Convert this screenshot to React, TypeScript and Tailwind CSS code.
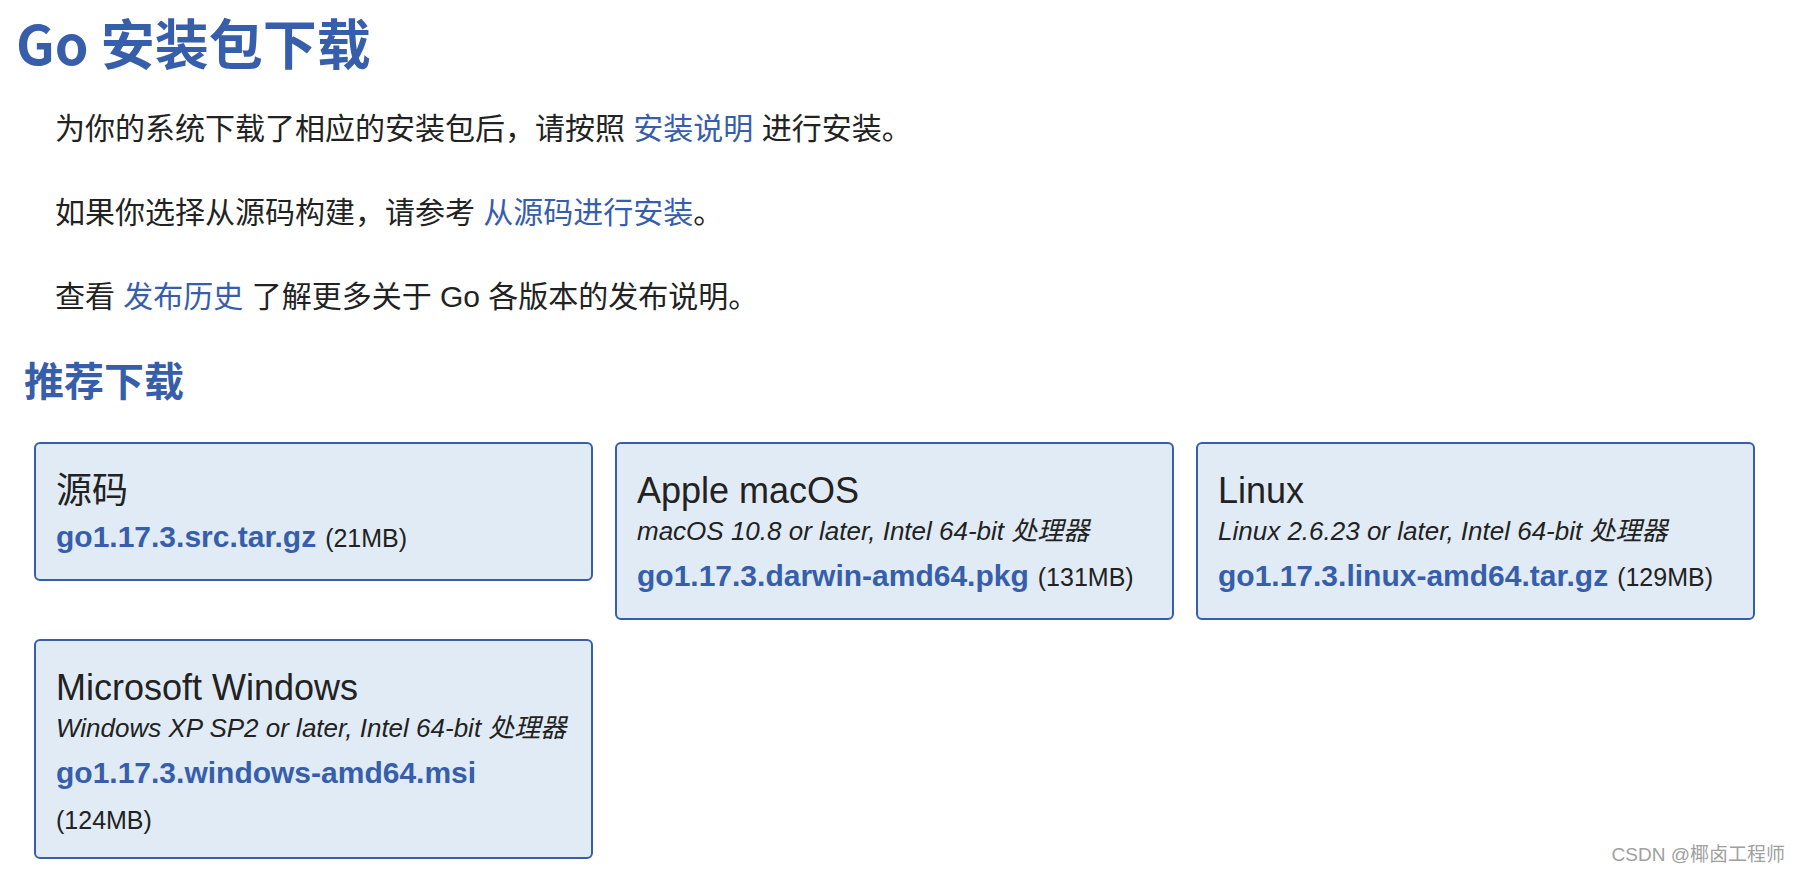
import React from 'react';

interface Download {
  title: string;
  desc?: string;
  file: string;
  size: string;
  sizeBlock?: boolean;
}

const downloads: Download[] = [
  { title: '源码', file: 'go1.17.3.src.tar.gz', size: '(21MB)' },
  {
    title: 'Apple macOS',
    desc: 'macOS 10.8 or later, Intel 64-bit 处理器',
    file: 'go1.17.3.darwin-amd64.pkg',
    size: '(131MB)',
  },
  {
    title: 'Linux',
    desc: 'Linux 2.6.23 or later, Intel 64-bit 处理器',
    file: 'go1.17.3.linux-amd64.tar.gz',
    size: '(129MB)',
  },
  {
    title: 'Microsoft Windows',
    desc: 'Windows XP SP2 or later, Intel 64-bit 处理器',
    file: 'go1.17.3.windows-amd64.msi',
    size: '(124MB)',
    sizeBlock: true,
  },
];

function DownloadCard({ d }: { d: Download }) {
  return (
    <div className="w-[559px] rounded-md border-2 border-[#375eab] bg-[#e0ebf5] px-5 pt-[25px] pb-[19px] text-[#222]">
      <div className="text-[36px] leading-[44px]">{d.title}</div>
      {d.desc && <div className="text-[26px] leading-[36px] italic">{d.desc}</div>}
      <div className={d.desc ? 'mt-[9px] leading-[36px]' : 'mt-[6px] leading-[36px]'}>
        <a href="#" className="text-[30px] font-bold text-[#375eab]">
          {d.file}
        </a>
        {!d.sizeBlock && <span className="ml-[9px] text-[25px]">{d.size}</span>}
      </div>
      {d.sizeBlock && <div className="mt-[6px] text-[25px] leading-[36px]">{d.size}</div>}
    </div>
  );
}

export default function App() {
  return (
    <div className="relative min-h-[872px] w-[1800px] bg-white font-['Liberation_Sans','Noto_Sans_CJK_SC',sans-serif] text-[#222]">
      <h1 className="pl-4 pt-[10px] font-['Noto_Sans_CJK_SC',sans-serif] text-[54px] leading-[64px] font-bold text-[#375eab]">
        Go 安装包下载
      </h1>

      <div className="mt-[35px] pl-[55px] text-[30px] leading-[40px]">
        <p>
          为你的系统下载了相应的安装包后，请按照 <a href="#" className="text-[#375eab]">安装说明</a> 进行安装。
        </p>
        <p className="mt-[44px]">
          如果你选择从源码构建，请参考 <a href="#" className="text-[#375eab]">从源码进行安装</a>。
        </p>
        <p className="mt-[44px]">
          查看 <a href="#" className="text-[#375eab]">发布历史</a> 了解更多关于 Go 各版本的发布说明。
        </p>
      </div>

      <h2 className="mt-[38px] pl-6 font-['Noto_Sans_CJK_SC',sans-serif] text-[40px] leading-[48px] font-bold text-[#375eab]">
        推荐下载
      </h2>

      <div className="mt-[39px] flex flex-wrap items-start gap-x-[22px] gap-y-[19px] pl-[34px]">
        {downloads.map((d) => (
          <DownloadCard key={d.file} d={d} />
        ))}
      </div>

      <div className="absolute right-[15px] bottom-[3px] text-[19px] text-[#a0a0a0]">CSDN @椰卤工程师</div>
    </div>
  );
}
